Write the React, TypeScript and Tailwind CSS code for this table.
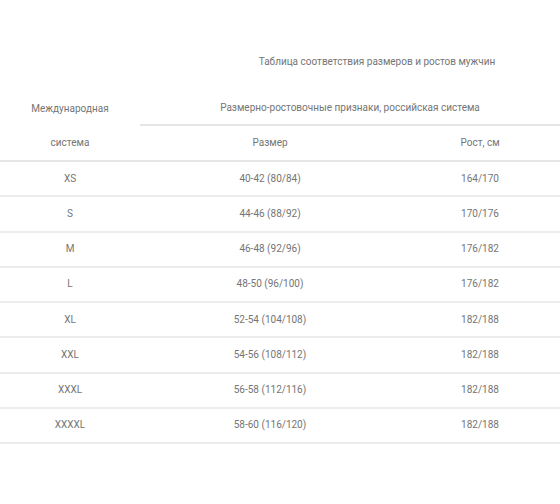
import React from "react";

const rows: [string, string, string][] = [
  ["XS", "40-42 (80/84)", "164/170"],
  ["S", "44-46 (88/92)", "170/176"],
  ["M", "46-48 (92/96)", "176/182"],
  ["L", "48-50 (96/100)", "176/182"],
  ["XL", "52-54 (104/108)", "182/188"],
  ["XXL", "54-56 (108/112)", "182/188"],
  ["XXXL", "56-58 (112/116)", "182/188"],
  ["XXXXL", "58-60 (116/120)", "182/188"],
];

export default function App() {
  return (
    <div
      className="w-[560px] h-[504px] bg-white text-[10px] leading-[14px] text-[#757575] overflow-hidden"
      style={{ fontFamily: "Roboto, 'Noto Sans', sans-serif" }}
    >
      <div className="pt-[55px] pl-[194px] text-center h-[91px]">
        Таблица соответствия размеров и ростов мужчин
      </div>
      <div className="flex h-[35px]">
        <div className="w-[140px] flex items-center justify-center">Международная</div>
        <div className="flex-1 flex items-center justify-center border-b-2 border-[#e6e6e6]">
          Размерно-ростовочные признаки, российская система
        </div>
      </div>
      <div className="flex h-[36px] border-b-2 border-[#e6e6e6]">
        <div className="w-[140px] flex items-center justify-center">система</div>
        <div className="w-[260px] flex items-center justify-center">Размер</div>
        <div className="flex-1 flex items-center justify-center">Рост, см</div>
      </div>
      {rows.map(([a, b, c]) => (
        <div key={a} className="flex h-[35.25px] border-b-2 border-[#ececec]">
          <div className="w-[140px] flex items-center justify-center">{a}</div>
          <div className="w-[260px] flex items-center justify-center">{b}</div>
          <div className="flex-1 flex items-center justify-center">{c}</div>
        </div>
      ))}
    </div>
  );
}
